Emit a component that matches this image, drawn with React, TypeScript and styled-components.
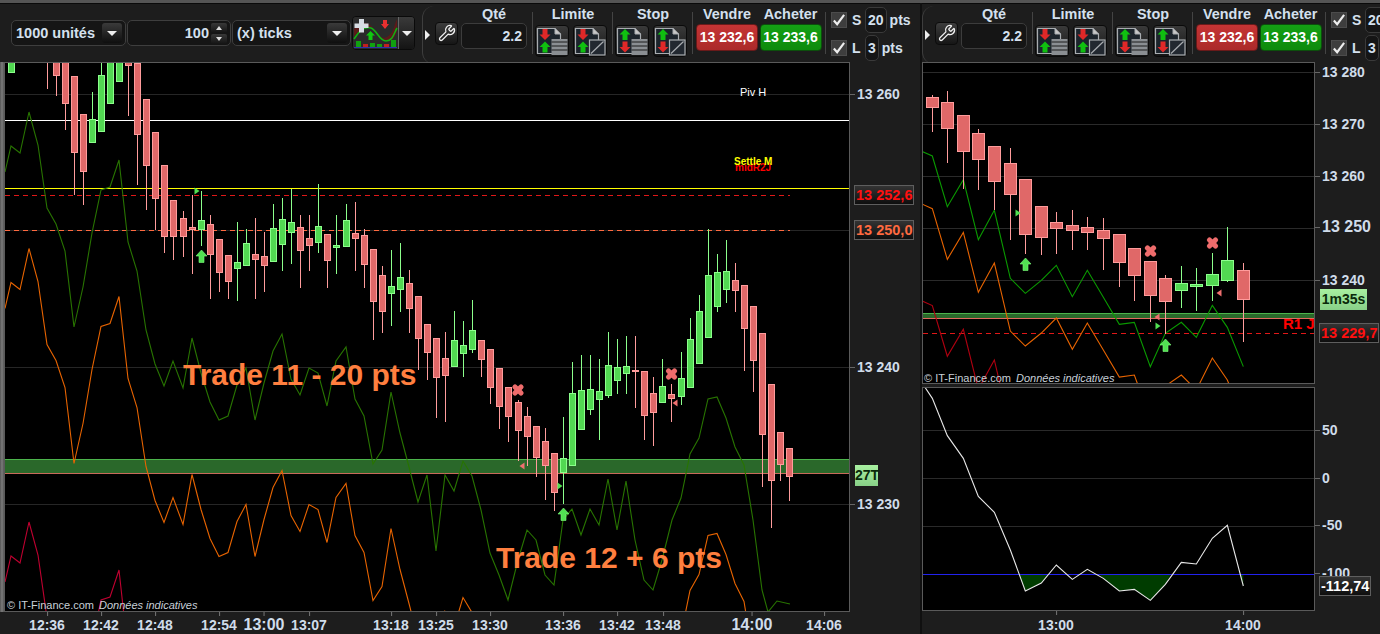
import React from "react";
import styled, { createGlobalStyle } from "styled-components";
import { Wrench } from "lucide-react";

const Global = createGlobalStyle`
  html, body { margin: 0; padding: 0; background: #1d1d1d; overflow: hidden; }
  body { font-family: "Liberation Sans", Arial, sans-serif; color: #d4e0ee; }
`;

const Page = styled.div`
  width: 1380px; height: 634px; display: flex; overflow: hidden; background: #1d1d1d; position: relative;
  border-top: 3px solid #555; box-sizing: border-box;
`;
const LeftPane = styled.div` width: 920px; flex: none; display: flex; flex-direction: column; `;
const Divider = styled.div` width: 2px; flex: none; background: #101010; `;
const RightPane = styled.div` flex: 1; min-width: 0; display: flex; flex-direction: column; `;

const Toolbar = styled.div`
  height: 59px; flex: none; display: flex; align-items: stretch; overflow: hidden; border-top: 1px solid #0a0a0a; box-sizing: border-box;
`;
const OrderBar = styled.div` width: 422px; flex: none; display: flex; align-items: center; padding-left: 11px; box-sizing: border-box; `;
const FieldGroup = styled.div<{ $w: number }>`
  width: ${p => p.$w}px; height: 26px; flex: none; margin-right: 1px; display: flex; align-items: center; box-sizing: border-box;
  border: 1px solid #3e3e3e; border-radius: 5px; background: #151515; padding: 0 3px 0 4px; font: bold 14.5px "Liberation Sans", sans-serif; color: #d4e0ee;
`;
const FieldText = styled.span<{ $right?: boolean }>` flex: 1; text-align: ${p => (p.$right ? "right" : "left")}; padding-right: ${p => (p.$right ? "2px" : "0")}; `;
const DropBtn = styled.div`
  width: 20px; height: 20px; flex: none; border-radius: 3px; background: linear-gradient(#3a3a3a, #0f0f0f); display: flex; align-items: center; justify-content: center;
  &::after { content: ""; border-left: 5px solid transparent; border-right: 5px solid transparent; border-top: 5px solid #eee; }
`;
const Spinner = styled.div` width: 16px; flex: none; display: flex; flex-direction: column; gap: 1px; `;
const SpinBtn = styled.div<{ $up?: boolean }>`
  height: 10px; border-radius: 2px; background: linear-gradient(#383838, #141414); display: flex; align-items: center; justify-content: center;
  &::after { content: ""; border-left: 3.5px solid transparent; border-right: 3.5px solid transparent; ${p => (p.$up ? "border-bottom: 4px solid #ddd;" : "border-top: 4px solid #ddd;")} }
`;
const StrategyBtn = styled.div`
  width: 63px; height: 34px; flex: none; display: flex; border: 1px solid #0a0a0a; border-radius: 4px; background: #2c2c2c; overflow: hidden; box-sizing: border-box;
`;
const StrategySplit = styled.div`
  flex: 1; border-left: 1px solid #666; background: linear-gradient(#3a3a3a, #141414); display: flex; align-items: center; justify-content: center;
  &::after { content: ""; border-left: 5px solid transparent; border-right: 5px solid transparent; border-top: 5px solid #eee; }
`;

const TradeBar = styled.div`
  width: 496px; flex: none; display: flex; align-items: stretch; position: relative; box-sizing: border-box; padding-left: 2px;
  border-left: 1px solid #3e3e3e; border-radius: 12px 0 0 12px; margin-top: 2px; margin-bottom: -2px;
`;
const Pointer = styled.div`
  align-self: center; width: 0; height: 0; border-top: 5px solid transparent; border-bottom: 5px solid transparent; border-left: 5px solid #eee; margin-right: 5px;
`;
const ToolBtn = styled.div`
  width: 23px; height: 23px; flex: none; align-self: center; margin-top: -4px; border: 1px solid #0c0c0c; border-radius: 4px; background: linear-gradient(#3c3c3c, #161616);
  display: flex; align-items: center; justify-content: center; color: #f0f0f0; margin-right: 3px; box-sizing: border-box;
`;
const Col = styled.div<{ $w: number }>` width: ${p => p.$w}px; flex: none; display: flex; flex-direction: column; align-items: center; `;
const ColTitle = styled.div<{ $pad?: number }>` font: bold 14.4px/16px "Liberation Sans", sans-serif; color: #d4e0ee; height: 17px; padding-left: ${p => p.$pad ?? 0}px; `;
const QtyBox = styled.div`
  width: 66px; height: 26px; box-sizing: border-box; border: 1px solid #3c3c3c; border-radius: 5px; background: #151515; text-align: right; padding-right: 4px;
  font: bold 14px/24px "Liberation Sans", sans-serif;
`;
const Sep = styled.div<{ $ml?: number }>` width: 1px; flex: none; align-self: flex-start; height: 42px; margin: 6px 2px 0 ${p => p.$ml ?? 5}px; background: #444; `;
const DocRow = styled.div` display: flex; gap: 4px; margin-top: 2px; `;
const DocBtn = styled.div`
  width: 34px; height: 32px; box-sizing: border-box; border: 1px solid #0a0a0a; border-radius: 4px; background: linear-gradient(#3a3a3a, #141414); display: flex; align-items: center; justify-content: center;
`;
const PriceBtn = styled.div<{ $buy?: boolean }>`
  width: 62px; height: 27px; margin-top: 1px; box-sizing: border-box; border-radius: 4px; border: 1px solid ${p => (p.$buy ? "#0c4f0c" : "#6a1a1a")};
  background: ${p => (p.$buy ? "linear-gradient(#14a014, #0d8a0d)" : "linear-gradient(#c53434, #ab2a2a)")};
  color: #fff; font: bold 14px/25px "Liberation Sans", sans-serif; text-align: center; white-space: nowrap;
`;
const StopCol = styled.div` display: flex; flex-direction: column; gap: 2px; padding-left: 3px; margin-top: 1px; flex: none; `;
const StopRow = styled.div` display: flex; align-items: center; height: 26px; font: bold 14px "Liberation Sans", sans-serif; `;
const Check = styled.div`
  width: 16px; height: 16px; background: #3e3e3e; border: 1px solid #4c4c4c; box-sizing: border-box; margin-right: 5px; display: flex; align-items: center; justify-content: center;
`;
const StopLetter = styled.span` width: 13px; `;
const PtsBox = styled.span`
  border: 1px solid #3a3a3a; border-radius: 5px; height: 26px; line-height: 24px; box-sizing: border-box; padding: 0 2px; background: #151515; margin-right: 3px;
`;

const ChartRow = styled.div<{ $h?: number }>`
  display: flex; ${p => (p.$h ? `flex: none; height: ${p.$h}px;` : "flex: 1; min-height: 0;")}
`;
const EdgeStrip = styled.div` width: 4px; flex: none; background: linear-gradient(90deg, #555, #7c7c7c 50%, #555); `;
const Plot = styled.div<{ $w: number; $h: number }>`
  width: ${p => p.$w}px; height: ${p => p.$h}px; flex: none; position: relative; background: #000; overflow: hidden;
  & > svg { display: block; }
`;
const Framed = styled.div` border: 1px solid #5a5a5a; flex: none; align-self: flex-start; `;
const PriceAxis = styled.div` flex: 1; position: relative; `;
const AxisLabel = styled.div<{ $y: number; $big?: boolean }>`
  position: absolute; left: 7px; top: ${p => p.$y}px; transform: translateY(-50%); white-space: nowrap; font: bold ${p => (p.$big ? 16 : 14)}px "Liberation Sans", sans-serif; color: #d0dcea;
  &::before { content: ""; position: absolute; left: -7px; top: 50%; width: 5px; height: 1px; background: #666; }
`;
const Badge = styled.div<{ $y: number; $c: string; $x?: number }>`
  position: absolute; left: ${p => p.$x ?? 4}px; top: ${p => p.$y}px; height: 20px; box-sizing: border-box; padding: 0 1px; white-space: nowrap;
  background: linear-gradient(#333, #0e0e0e); border: 1px solid #5e5e5e; color: ${p => p.$c}; font: bold 14.5px/18px "Liberation Sans", sans-serif; text-align: center;
`;
const GreenBadge = styled.div<{ $y: number; $w: number; $x?: number }>`
  position: absolute; left: ${p => p.$x ?? 5}px; top: ${p => p.$y}px; width: ${p => p.$w}px; height: 21px; box-sizing: border-box;
  background: linear-gradient(#a8f0a0, #88d088); color: #0a2a0a; font: bold 14px/21px "Liberation Sans", sans-serif; text-align: center;
`;
const TimeAxis = styled.div` height: 22px; flex: none; position: relative; `;
const TimeLabel = styled.div<{ $x: number; $big?: boolean; $top?: number }>`
  position: absolute; left: ${p => p.$x}px; top: ${p => p.$top ?? 4}px; transform: translateX(-50%); font: bold ${p => (p.$big ? 16 : 14)}px/18px "Liberation Sans", sans-serif; color: #d0dcea; white-space: nowrap;
  &::before { content: ""; position: absolute; left: 50%; top: -${p => p.$top ?? 4}px; width: 1px; height: 4px; background: #777; }
`;
const TradeNote = styled.div<{ $x: number; $y: number }>`
  position: absolute; left: ${p => p.$x}px; top: ${p => p.$y}px; font: bold 30px/32px "Liberation Sans", sans-serif; color: #ff7f3f; white-space: nowrap;
`;
const LevelTag = styled.div<{ $x: number; $y: number; $c: string; $size?: number; $bold?: boolean }>`
  position: absolute; left: ${p => p.$x}px; top: ${p => p.$y}px; font: ${p => (p.$bold ? "bold" : "normal")} ${p => p.$size ?? 10}px/12px "Liberation Sans", sans-serif; color: ${p => p.$c}; white-space: nowrap;
`;
const Copyright = styled.div<{ $y: number; $x: number }>`
  position: absolute; left: ${p => p.$x}px; top: ${p => p.$y}px; font: 11px/12px "Liberation Sans", sans-serif; color: #c8d0d8; white-space: nowrap;
  & em { margin-left: 5px; }
`;
const RightChartStack = styled.div` flex: 1; min-height: 0; display: flex; flex-direction: column; `;

/* ---------- chart data ---------- */
type Raw = [number, number, number, number | null, number | null, "r" | "g"];
type C = { x: number; t: number; b: number; wt: number; wb: number; c: "r" | "g" };
const mapC = (dx: number, dy: number) => (r: Raw): C => ({
  x: Math.floor(dx + r[0] / 3), t: Math.round(dy + r[1] / 3), b: Math.round(dy + r[2] / 3),
  wt: Math.round(dy + (r[3] ?? r[1]) / 3), wb: Math.round(dy + (r[4] ?? r[2]) / 3), c: r[5],
});

const leftA: Raw[] = [
  [34,-200,38,null,null,"g"],[142,-200,-20,null,86,"r"],[169,-20,47,null,107,"r"],[196,-20,131,null,209,"r"],
  [223,49,278,null,405,"r"],[250,163,335,null,434,"r"],[277,178,250,97,null,"g"],[304,46,215,-20,null,"g"],[331,-20,131,null,null,"g"],[358,-20,65,null,null,"g"],
  [385,-20,17,null,167,"r"],[412,10,224,null,375,"r"],[439,118,317,null,449,"r"],[466,217,418,null,511,"r"],[493,316,530,null,578,"r"],[520,421,530,null,599,"r"],
  [550,475,530,454,590,"r"],[577,502,511,406,641,"r"],[604,481,510,394,557,"g"],[631,493,584,466,716,"r"],[658,538,638,null,695,"r"],[685,586,665,null,716,"r"],
  [712,607,626,487,722,"g"],[739,550,617,508,null,"g"],[766,583,599,475,716,"r"],[793,589,617,517,695,"r"],[820,505,605,433,null,"g"],[847,478,554,415,632,"g"],
  [874,487,518,388,611,"g"],[901,502,572,466,683,"r"],[928,535,557,466,632,"r"],[955,499,548,373,578,"g"],[982,523,602,null,683,"r"],[1009,556,563,466,641,"g"],
  [1039,481,560,433,null,"g"],[1066,520,536,427,632,"r"],[1093,526,614,508,683,"r"],[1120,568,725,null,840,"r"],[1147,646,755,619,818,"r"],[1174,679,701,571,797,"g"],
  [1201,652,689,550,755,"g"],[1228,670,746,631,818,"r"],[1255,709,838,null,930,"r"],[1282,792,880,null,960,"r"],
];
const leftB: Raw[] = [
  [19,355,473,null,593,"r"],[46,415,467,337,605,"r"],[73,361,440,274,null,"g"],[100,376,401,304,470,"g"],[127,331,389,241,398,"g"],[154,361,419,null,470,"r"],
  [181,388,503,null,551,"r"],[208,445,560,null,626,"r"],[235,502,590,null,665,"r"],[265,547,632,541,722,"r"],[292,589,650,562,737,"r"],[319,619,713,null,770,"r"],
  [346,664,737,625,839,"r"],[373,700,818,null,872,"r"],[400,715,760,591,851,"g"],[427,520,737,427,null,"g"],[454,511,629,406,null,"g"],[481,508,569,406,584,"g"],
  [508,514,539,418,659,"g"],[535,436,527,337,533,"g"],[562,442,482,358,521,"g"],[589,439,461,349,521,"g"],[616,451,455,349,563,"r"],[643,454,587,null,659,"r"],
  [670,520,578,472,677,"r"],[697,499,548,418,null,"g"],[724,523,536,493,605,"r"],[754,475,530,397,554,"g"],[781,358,503,295,null,"g"],[808,274,431,226,null,"g"],
  [835,166,353,28,null,"g"],[862,157,260,103,275,"g"],[889,154,209,61,248,"g"],[916,181,212,130,275,"r"],[943,196,326,null,452,"r"],[970,259,422,null,515,"r"],
  [997,340,644,null,800,"r"],[1024,493,782,null,924,"r"],[1051,637,734,null,782,"r"],[1078,685,770,null,842,"r"],
];
const leftCandles = [...leftA.map(mapC(0, 60)), ...leftB.map(mapC(430, 220))];

const leftGreen: [number, number][] = [
  [5,172],[11,146],[20,153],[29,112],[38,145],[47,208],[56,224],[65,251],[74,327],[83,287],[92,233],[101,190],[110,187],[119,160],[128,242],[137,271],
  [146,330],[155,364],[164,386],[173,361],[183,388],[192,338],[201,373],[210,402],[219,420],[228,416],[237,385],[246,368],[255,420],[264,383],[273,351],
  [282,334],[291,379],[300,395],[309,368],[318,373],[327,406],[336,361],[346,347],[355,399],[364,416],[373,464],[382,450],[391,392],[400,433],[409,467],
  [418,502],[427,475],[436,551],[445,475],[454,491],[463,461],[472,476],[481,510],[490,553],[499,575],[508,600],[518,560],[527,530],[536,540],[545,575],
  [554,585],[563,520],[572,509],[581,535],[590,509],[599,525],[608,479],[617,530],[626,481],[635,540],[644,580],[653,590],[662,560],[672,520],[681,498],
  [690,454],[699,438],[708,399],[717,397],[726,418],[735,447],[744,465],[753,520],[762,590],[768,612],[777,601],[790,604],
];
const shift = (pts: [number, number][], d: number) => pts.map(([x, y]) => `${x},${y + d}`).join(" ");

const rightRaw: Raw[] = [
  [37,100,131,93,204,"r"],[82,115,194,81,296,"r"],[130,154,263,null,375,"r"],[175,208,287,195,378,"r"],[223,247,353,null,439,"r"],[271,298,392,253,528,"r"],
  [316,346,513,null,570,"r"],[364,427,521,null,573,"r"],[409,475,494,445,570,"r"],[457,484,500,439,558,"r"],[502,490,506,460,558,"r"],[550,499,524,463,618,"r"],
  [598,511,596,null,669,"r"],[643,553,635,null,711,"r"],[691,592,695,null,773,"r"],[736,643,713,634,810,"r"],[784,658,680,607,732,"g"],[829,661,668,613,741,"g"],
  [877,631,665,568,711,"g"],[922,589,650,490,654,"g"],[970,619,707,598,833,"r"],
];
const rightCandles = rightRaw.map(mapC(920, 64));
const rightGreenZ = [[8,263],[37,276],[82,428],[130,347],[175,527],[223,439],[271,643],[316,688],[364,649],[409,604],[457,698],[502,619],[550,700],[598,781],[643,775],[691,908],[736,808],[784,775],[829,820],[877,724],[922,790],[970,908]];
const rightGreen = rightGreenZ.map(([x, y]) => [920 + x / 3, 64 + y / 3] as [number, number]);

const oscZ = [[15,22],[37,55],[82,167],[130,235],[175,349],[223,397],[271,510],[316,633],[364,609],[409,555],[457,598],[502,568],[550,595],[598,633],[643,628],[691,661],[736,613],[784,547],[829,552],[877,475],[922,436],[970,618]];
const osc = oscZ.map(([x, y]) => [920 + x / 3, 380 + y / 3] as [number, number]);
const oscFills = [
  "1019,574 1025.3,591 1041.3,583 1049,574",
  "1099,574 1103.3,578.3 1119.3,591 1134.3,589.3 1150.3,600.3 1165.3,584.3 1171,574",
  "1240,574 1243.3,586 1243.3,574",
];

/* ---------- chart drawing ---------- */
const RED = { f: "#e06868", s: "#ff9c9c" };
const GRN = { f: "#52d852", s: "#8cff8c" };
const Candles = ({ items, half }: { items: C[]; half: number }) => (
  <g shapeRendering="crispEdges">
    {items.map((k, i) => {
      const col = k.c === "r" ? RED : GRN;
      return (
        <g key={i}>
          <rect x={k.x} y={k.wt} width={1} height={k.wb - k.wt} fill={col.s} />
          <rect x={k.x - half + 0.5} y={k.t + 0.5} width={half * 2} height={Math.max(k.b - k.t - 1, 1)} fill={col.f} stroke={col.s} strokeWidth={1} />
        </g>
      );
    })}
  </g>
);
const UpArrow = ({ x, y }: { x: number; y: number }) => (
  <polygon points={`${x},${y} ${x + 5.5},${y + 6} ${x + 2.5},${y + 6} ${x + 2.5},${y + 12.5} ${x - 2.5},${y + 12.5} ${x - 2.5},${y + 6} ${x - 5.5},${y + 6}`} fill="#52e052" stroke="#7cfc7c" strokeWidth={0.6} />
);
const XMark = ({ x, y }: { x: number; y: number }) => (
  <g stroke="#ee6c6c" strokeWidth={5.2} strokeLinecap="round">
    <line x1={x - 3} y1={y - 3} x2={x + 3} y2={y + 3} />
    <line x1={x + 3} y1={y - 3} x2={x - 3} y2={y + 3} />
  </g>
);
const TriLeft = ({ x, y }: { x: number; y: number }) => <polygon points={`${x - 2.5},${y} ${x + 2.5},${y - 3.5} ${x + 2.5},${y + 3.5}`} fill="#f07070" />;
const TriRight = ({ x, y }: { x: number; y: number }) => <polygon points={`${x + 2.5},${y} ${x - 2.5},${y - 3.5} ${x - 2.5},${y + 3.5}`} fill="#52e052" />;
const HLine = ({ x1, x2, y, c, dash }: { x1: number; x2: number; y: number; c: string; dash?: string }) => (
  <line x1={x1} x2={x2} y1={y + 0.5} y2={y + 0.5} stroke={c} strokeWidth={1} strokeDasharray={dash} shapeRendering="crispEdges" />
);
const Trend = ({ pts, d, c }: { pts: [number, number][]; d: number; c: string }) => (
  <polyline points={shift(pts, d)} fill="none" stroke={c} strokeWidth={1.1} strokeLinejoin="miter" />
);

const LeftChart = () => (
  <svg width={844} height={548} viewBox="5 63 844 548">
    {[94, 230, 367, 504].map(y => <HLine key={y} x1={5} x2={849} y={y} c="#262626" />)}
    <HLine x1={5} x2={849} y={120} c="#ffffff" />
    <HLine x1={5} x2={849} y={188} c="#ffff00" />
    <HLine x1={5} x2={790} y={195} c="#e01818" dash="5 4" />
    <HLine x1={5} x2={790} y={230} c="#ff6a40" dash="5 4" />
    <rect x={5} y={459} width={844} height={15} fill="#2a682a" shapeRendering="crispEdges" />
    <HLine x1={5} x2={849} y={459} c="#4cb44c" />
    <HLine x1={5} x2={849} y={473} c="#c86a5a" />
    <Trend pts={leftGreen} d={0} c="#287400" />
    <Trend pts={leftGreen} d={136.5} c="#e86400" />
    <Trend pts={leftGreen} d={410} c="#c00030" />
    <Candles items={leftCandles} half={3} />
    <UpArrow x={201.5} y={250} />
    <UpArrow x={563.5} y={508} />
    <TriRight x={197} y={191} />
    <TriRight x={560} y={486} />
    <TriLeft x={522} y={466} />
    <TriLeft x={675} y={403} />
    <XMark x={518} y={390} />
    <XMark x={671.5} y={374} />
  </svg>
);

const RightChart = () => (
  <svg width={391} height={320} viewBox="923 63 391 320">
    {[72, 124, 176, 228, 280].map(y => <HLine key={y} x1={923} x2={1314} y={y} c="#2a2a2a" />)}
    <rect x={923} y={313} width={391} height={5} fill="#2a682a" shapeRendering="crispEdges" />
    <HLine x1={923} x2={1314} y={313} c="#4cb44c" />
    <HLine x1={923} x2={1314} y={318} c="#e06a60" />
    <HLine x1={923} x2={1314} y={333} c="#e01818" dash="5 4" />
    <Trend pts={rightGreen} d={0} c="#0a9a00" />
    <Trend pts={rightGreen} d={52.7} c="#e86400" />
    <Trend pts={rightGreen} d={149.6} c="#b00010" />
    <Candles items={rightCandles} half={6} />
    <UpArrow x={1025.5} y={258} />
    <UpArrow x={1165.5} y={339} />
    <TriRight x={1018} y={213} />
    <TriRight x={1158} y={326} />
    <TriLeft x={1157} y={317} />
    <TriLeft x={1219} y={293} />
    <XMark x={1150.5} y={251} />
    <XMark x={1212.5} y={243} />
  </svg>
);

const OscChart = () => (
  <svg width={391} height={222} viewBox="923 388 391 222">
    {[430, 478, 526].map(y => <HLine key={y} x1={923} x2={1314} y={y} c="#2a2a2a" />)}
    {oscFills.map((p, i) => <polygon key={i} points={p} fill="#003c00" />)}
    <HLine x1={923} x2={1314} y={574} c="#2222ee" />
    <polyline points={osc.map(p => p.join(",")).join(" ")} fill="none" stroke="#e8e8e8" strokeWidth={1.1} />
  </svg>
);

/* ---------- toolbar icons ---------- */
const DocIcon = ({ upFirst, list }: { upFirst?: boolean; list?: boolean }) => {
  const Up = ({ y }: { y: number }) => <polygon points={`9,${y} 14.5,${y + 5.5} 11.5,${y + 5.5} 11.5,${y + 11} 6.5,${y + 11} 6.5,${y + 5.5} 3.5,${y + 5.5}`} fill="#10c010" />;
  const Down = ({ y }: { y: number }) => <polygon points={`9,${y + 11} 14.5,${y + 5.5} 11.5,${y + 5.5} 11.5,${y} 6.5,${y} 6.5,${y + 5.5} 3.5,${y + 5.5}`} fill="#e02828" />;
  return (
    <svg width={32} height={30} viewBox="0 0 32 30">
      <path d="M1.5 2.5 H19 L24.5 8 V27.5 H1.5 Z" fill="#1c242c" stroke="#a8acb0" strokeWidth={1.2} />
      <path d="M19 2.5 V8 H24.5" fill="#c8c8c8" stroke="#a8acb0" strokeWidth={1} />
      {upFirst ? <Up y={3} /> : <Down y={3} />}
      {upFirst ? <Down y={15.5} /> : <Up y={15.5} />}
      {list ? (
        <g>
          <rect x={15.5} y={13} width={16} height={16} fill="#8a8e92" />
          {[16, 20, 24].map(y => <line key={y} x1={15.5} x2={31.5} y1={y} y2={y} stroke="#1c1c1c" strokeWidth={1} />)}
        </g>
      ) : (
        <g>
          <rect x={15.5} y={14} width={15.5} height={15} fill="#222830" stroke="#a8acb0" strokeWidth={1.2} />
          <line x1={17} y1={27.5} x2={29.5} y2={15.5} stroke="#a8acb0" strokeWidth={1.2} />
        </g>
      )}
    </svg>
  );
};
const CheckMark = () => (
  <svg width={15} height={14} viewBox="0 0 15 14"><path d="M2 7.5 L5.5 11.5 L13 1.5" fill="none" stroke="#eeeeee" strokeWidth={2.3} /></svg>
);
const StrategyIcon = () => (
  <svg width={45} height={32} viewBox="0 0 45 32" style={{ flex: "none" }}>
    <rect width={45} height={32} fill="#2a2a2a" />
    <path d="M1 12 C6 6 12 4 17 8 S27 24 34 20 S41 8 44 2 V14 C41 24 36 26 30 22 S22 10 16 10 S6 14 1 20 Z" fill="#5a1a1a" />
    <path d="M1 22 C6 14 12 9 18 11 S26 24 33 24 S41 16 44 11" fill="none" stroke="#12b012" strokeWidth={1.6} />
    <path d="M6 2 h5 v4.5 h4.5 v4.5 h-4.5 v4.5 h-5 v-4.5 h-4.5 v-4.5 h4.5 Z" fill="#d6dce2" />
    <polygon points="17.5,14 22,18.5 19.5,18.5 19.5,23 15.5,23 15.5,18.5 13,18.5" fill="#10c810" />
    <polygon points="32,12 36,7 34,7 34,3 30,3 30,7 28,7" fill="#e83030" />
    <rect x={3} y={24} width={5} height={6} fill="#10a010" />
    <rect x={10} y={27} width={5} height={3} fill="#c02020" />
    <rect x={17} y={26} width={5} height={4} fill="#10a010" />
    <rect x={24} y={27} width={5} height={3} fill="#10a010" />
    <rect x={31} y={27} width={5} height={3} fill="#c02020" />
    <rect x={38} y={23} width={5} height={7} fill="#10a010" />
    <rect x={1} y={30} width={43} height={1} fill="#3030b0" />
  </svg>
);

const TradeTools = () => (
  <TradeBar>
    <Pointer />
    <ToolBtn><Wrench size={18} strokeWidth={1.7} /></ToolBtn>
    <Col $w={66}><ColTitle>Qté</ColTitle><QtyBox>2.2</QtyBox></Col>
    <Sep />
    <Col $w={72}>
      <ColTitle $pad={4}>Limite</ColTitle>
      <DocRow><DocBtn><DocIcon list /></DocBtn><DocBtn><DocIcon /></DocBtn></DocRow>
    </Col>
    <Sep />
    <Col $w={72}>
      <ColTitle $pad={4}>Stop</ColTitle>
      <DocRow><DocBtn><DocIcon upFirst list /></DocBtn><DocBtn><DocIcon upFirst /></DocBtn></DocRow>
    </Col>
    <Sep />
    <Col $w={64}><ColTitle>Vendre</ColTitle><PriceBtn>13 232,6</PriceBtn></Col>
    <Col $w={63}><ColTitle>Acheter</ColTitle><PriceBtn $buy>13 233,6</PriceBtn></Col>
    <Sep $ml={3} />
    <StopCol>
      <StopRow><Check><CheckMark /></Check><StopLetter>S</StopLetter><PtsBox>20</PtsBox>pts</StopRow>
      <StopRow><Check><CheckMark /></Check><StopLetter>L</StopLetter><PtsBox>3</PtsBox>pts</StopRow>
    </StopCol>
  </TradeBar>
);

export default function App() {
  const priceL: [string, number][] = [["13 260", 32], ["13 240", 305], ["13 230", 442]];
  const timesL: [string, number, boolean?][] = [["12:36", 47], ["12:42", 101], ["12:48", 155], ["12:54", 219], ["13:00", 264, true], ["13:07", 309], ["13:18", 391], ["13:25", 436], ["13:30", 490], ["13:36", 563], ["13:42", 617], ["13:48", 663], ["14:00", 752, true], ["14:06", 824]];
  return (
    <Page>
      <Global />
      <LeftPane>
        <Toolbar>
          <OrderBar>
            <FieldGroup $w={115}><FieldText>1000 unités</FieldText><DropBtn /></FieldGroup>
            <FieldGroup $w={104}><FieldText $right>100</FieldText><Spinner><SpinBtn $up /><SpinBtn /></Spinner></FieldGroup>
            <FieldGroup $w={119}><FieldText>(x) ticks</FieldText><DropBtn /></FieldGroup>
            <StrategyBtn><StrategyIcon /><StrategySplit /></StrategyBtn>
          </OrderBar>
          <TradeTools />
        </Toolbar>
        <ChartRow>
          <EdgeStrip />
          <Framed>
            <Plot $w={844} $h={548}>
              <LeftChart />
              <LevelTag $x={735} $y={23} $c="#ffffff" $size={11}>Piv H</LevelTag>
              <LevelTag $x={730} $y={99} $c="#ff0000" $size={10} $bold>midR2J</LevelTag>
              <LevelTag $x={729} $y={93} $c="#ffff00" $size={10} $bold>Settle M</LevelTag>
              <TradeNote $x={178} $y={296}>Trade 11 - 20 pts</TradeNote>
              <TradeNote $x={491} $y={479}>Trade 12 + 6 pts</TradeNote>
              <Copyright $x={2} $y={536}>© IT-Finance.com<em>Données indicatives</em></Copyright>
            </Plot>
          </Framed>
          <PriceAxis>
            {priceL.map(([t, y]) => <AxisLabel key={t} $y={y}>{t}</AxisLabel>)}
            <Badge $y={123} $c="#ff1010">13 252,6</Badge>
            <Badge $y={158} $c="#ff6a40">13 250,0</Badge>
            <GreenBadge $y={403} $w={23}>27T</GreenBadge>
          </PriceAxis>
        </ChartRow>
        <TimeAxis>
          {timesL.map(([t, x, big]) => <TimeLabel key={t} $x={x} $big={big}>{t}</TimeLabel>)}
        </TimeAxis>
      </LeftPane>
      <Divider />
      <RightPane>
        <Toolbar><TradeTools /></Toolbar>
        <RightChartStack>
          <ChartRow $h={325}>
            <Framed>
              <Plot $w={391} $h={320}>
                <RightChart />
                <LevelTag $x={360} $y={255} $c="#ff0000" $size={15} $bold>R1 J</LevelTag>
                <Copyright $x={1} $y={309}>© IT-Finance.com<em>Données indicatives</em></Copyright>
              </Plot>
            </Framed>
            <PriceAxis>
              <AxisLabel $y={10}>13 280</AxisLabel>
              <AxisLabel $y={62}>13 270</AxisLabel>
              <AxisLabel $y={114}>13 260</AxisLabel>
              <AxisLabel $y={165} $big>13 250</AxisLabel>
              <AxisLabel $y={218}>13 240</AxisLabel>
              <GreenBadge $y={227} $w={47}>1m35s</GreenBadge>
              <Badge $y={261} $c="#ff1010">13 229,7</Badge>
            </PriceAxis>
          </ChartRow>
          <ChartRow $h={224}>
            <Framed>
              <Plot $w={391} $h={222}>
                <OscChart />
              </Plot>
            </Framed>
            <PriceAxis>
              <AxisLabel $y={43}>50</AxisLabel>
              <AxisLabel $y={91}>0</AxisLabel>
              <AxisLabel $y={138}>-50</AxisLabel>
              <AxisLabel $y={186}>-100</AxisLabel>
              <Badge $y={189} $c="#ffffff">-112,74</Badge>
            </PriceAxis>
          </ChartRow>
          <TimeAxis>
            <TimeLabel $x={134} $top={5}>13:00</TimeLabel>
            <TimeLabel $x={321} $top={5}>14:00</TimeLabel>
          </TimeAxis>
        </RightChartStack>
      </RightPane>
    </Page>
  );
}
